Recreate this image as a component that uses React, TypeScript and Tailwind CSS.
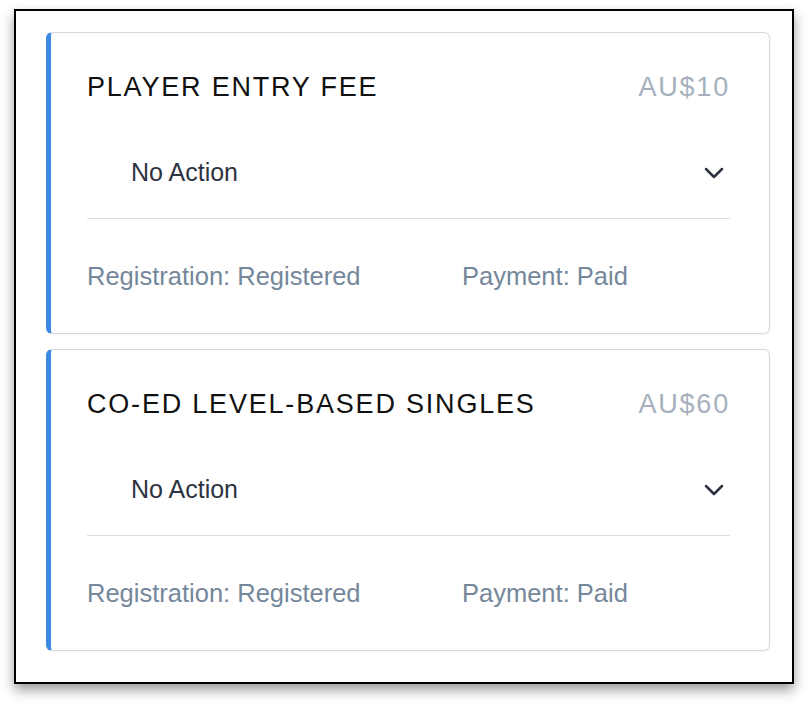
import React from "react";

const ChevronDown = () => (
  <svg width="32" height="32" viewBox="0 0 24 24" fill="none" stroke="#2d3340" strokeWidth="1.9" strokeLinecap="round" strokeLinejoin="round">
    <path d="m6 9 6 6 6-6" />
  </svg>
);

type Item = { title: string; price: string };

const items: Item[] = [
  { title: "PLAYER ENTRY FEE", price: "AU$10" },
  { title: "CO-ED LEVEL-BASED SINGLES", price: "AU$60" },
];

function Card({ item }: { item: Item }) {
  return (
    <div className="bg-white border border-[#d3d8de] border-l-[5px] border-l-[#3d8ae5] rounded-[6px] pl-[36px] pr-[39px] pt-[38px] pb-[42px] shadow-[0_1px_2px_rgba(0,0,0,0.05)]">
      <div className="flex items-center justify-between h-[32px]">
        <div className="text-[27px] tracking-[1.8px] text-[#111]">{item.title}</div>
        <div className="text-[27px] tracking-[1.8px] text-[#a6b1bd]">{item.price}</div>
      </div>
      <div className="flex items-center justify-between h-[56px] mt-[42px] pl-[44px]">
        <div className="text-[25px] text-[#2d3340]">No Action</div>
        <ChevronDown />
      </div>
      <div className="h-px bg-[#d9dee4] mt-[17px]" />
      <div className="flex items-center h-[30px] mt-[42px] text-[25.5px] text-[#75879a]">
        <div className="w-[375px]">Registration: Registered</div>
        <div>Payment: Paid</div>
      </div>
    </div>
  );
}

export default function App() {
  return (
    <div className="w-[808px] h-[704px] bg-white pt-[9px] pl-[14px]" style={{ fontFamily: '"Liberation Sans", Arial, Helvetica, sans-serif' }}>
      <div className="w-[780px] h-[675px] border-2 border-black bg-white shadow-[0_6px_12px_rgba(0,0,0,0.4)] pt-[21px] pl-[30px] pr-[22px] flex flex-col gap-[15px]">
        {items.map((it) => (
          <Card key={it.title} item={it} />
        ))}
      </div>
    </div>
  );
}
